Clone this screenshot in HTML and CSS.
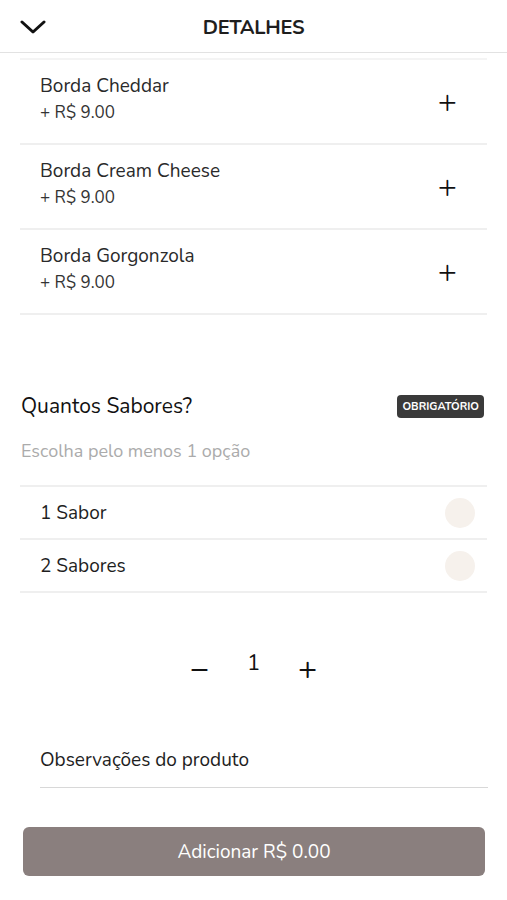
FILE: index.html
```html
<!DOCTYPE html>
<html lang="pt-BR">
<head>
  <meta charset="UTF-8" />
  <title>Detalhes</title>
  <link rel="stylesheet" href="styles.css">
</head>
<body>
  <!-- Header -->
  <header class="header">
    <button class="back" aria-label="Fechar">
      <svg width="26" height="16" viewBox="0 0 26 16"><path d="M2 3 L13 13 L24 3" fill="none" stroke="#111" stroke-width="3" stroke-linecap="round" stroke-linejoin="round"/></svg>
    </button>
    <div class="title">DETALHES</div>
  </header>

  <div class="content">
    <!-- Bordas -->
    <div class="extras">
      <div class="extra-item">
        <div class="extra-info">
          <span class="extra-name">Borda Cheddar</span>
          <span class="extra-price">+ R$ 9.00</span>
        </div>
        <span class="plus">+</span>
      </div>
      <div class="extra-item">
        <div class="extra-info">
          <span class="extra-name">Borda Cream Cheese</span>
          <span class="extra-price">+ R$ 9.00</span>
        </div>
        <span class="plus">+</span>
      </div>
      <div class="extra-item">
        <div class="extra-info">
          <span class="extra-name">Borda Gorgonzola</span>
          <span class="extra-price">+ R$ 9.00</span>
        </div>
        <span class="plus">+</span>
      </div>
    </div>

    <!-- Sabores -->
    <section class="group">
      <div class="group-head">
        <h3>Quantos Sabores?</h3>
        <span class="badge">OBRIGATÓRIO</span>
      </div>
      <p class="hint">Escolha pelo menos 1 opção</p>
      <div class="options">
        <div class="option"><span>1 Sabor</span><span class="radio"></span></div>
        <div class="option"><span>2 Sabores</span><span class="radio"></span></div>
      </div>
    </section>

    <!-- Quantidade -->
    <div class="qty">
      <span class="qty-btn">&minus;</span>
      <span class="qty-value">1</span>
      <span class="qty-btn">+</span>
    </div>

    <div class="notes">Observações do produto</div>

    <button class="add-btn">Adicionar R$ 0.00</button>
  </div>
</body>
</html>
```

FILE: styles.css
```css
:root {
  --text-color: #1e1e1e;
  --line-color: #efefef;
  --muted-color: #ababab;
  --button-color: #8a7f7e;
  --font-family: 'Nunito', 'Lato', sans-serif;
}

body {
  margin: 0;
  padding: 0;
  font-family: var(--font-family);
  color: var(--text-color);
  background: #fff;
}

/* Header */
.header {
  height: 53px;
  display: flex;
  align-items: center;
  justify-content: center;
  position: relative;
  border-bottom: 1px solid #e2e2e2;
  box-sizing: border-box;
}
.back {
  position: absolute;
  left: 20px;
  top: 19px;
  background: none;
  border: none;
  padding: 0;
  line-height: 0;
}
.title {
  font-size: 20px;
  font-weight: 700;
  letter-spacing: -0.3px;
  padding-top: 3px;
}

.content {
  padding: 5px 20px 0;
}

/* Extras list */
.extras {
  border-top: 2px solid #f4f4f4;
}
.extra-item {
  display: flex;
  align-items: center;
  justify-content: space-between;
  height: 83px;
  padding: 0 30px 0 20px;
  border-bottom: 2px solid var(--line-color);
}
.extra-info {
  display: flex;
  flex-direction: column;
  gap: 2px;
  margin-top: -7px;
}
.extra-name {
  font-size: 19px;
  color: #2a2a2a;
}
.extra-price {
  font-size: 17px;
  color: #333;
}
.plus {
  font-size: 32px;
  font-weight: 300;
  color: #111;
  line-height: 1;
}

/* Group */
.group {
  margin-top: 77px;
}
.group-head {
  display: flex;
  align-items: center;
  justify-content: space-between;
}
.group-head h3 {
  margin: 0;
  font-size: 21px;
  font-weight: 400;
  color: #111;
  margin-left: 1px;
}
.badge {
  background: #3a3a3a;
  color: #fff;
  font-size: 11px;
  font-weight: 700;
  border-radius: 4px;
  padding: 4px 5px;
  margin-right: 3px;
}
.hint {
  margin: 19px 0 0 1px;
  font-size: 18px;
  color: var(--muted-color);
}
.options {
  margin-top: 22px;
  border-top: 2px solid var(--line-color);
}
.option {
  display: flex;
  align-items: center;
  justify-content: space-between;
  height: 51px;
  padding: 0 12px 0 20px;
  font-size: 19px;
  color: #1e1e1e;
  border-bottom: 2px solid var(--line-color);
}
.radio {
  width: 30px;
  height: 30px;
  border-radius: 50%;
  background: #f6f1ec;
}

/* Quantity */
.qty {
  display: flex;
  justify-content: center;
  align-items: center;
  gap: 38px;
  margin-top: 48px;
}
.qty-btn {
  font-size: 32px;
  color: #111;
  line-height: 1;
  margin-top: 12px;
}
.qty-value {
  font-size: 22px;
  color: #111;
}

.notes {
  margin: 62px 0 0 20px;
  padding-bottom: 14px;
  font-size: 19px;
  color: #1e1e1e;
  border-bottom: 1px solid #d8d8d8;
  margin-right: -1px;
}

.add-btn {
  display: block;
  width: 462px;
  height: 49px;
  margin: 39px 0 0 3px;
  border: none;
  border-radius: 6px;
  background: var(--button-color);
  color: #fff;
  font-family: var(--font-family);
  font-size: 19px;
}
```
